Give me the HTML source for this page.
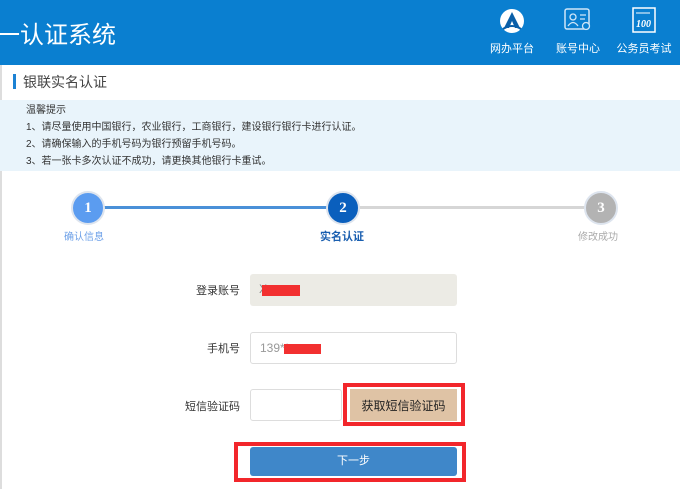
<!DOCTYPE html>
<html><head><meta charset="utf-8"><style>
*{margin:0;padding:0;box-sizing:border-box}
body{width:680px;height:489px;overflow:hidden;background:#fff;font-family:"Liberation Sans","Noto Sans CJK SC",sans-serif;position:relative}
.hd{position:absolute;left:0;top:0;width:680px;height:65px;background:#0a7fd0}
.ttl{position:absolute;left:-4px;top:15px;color:#fff;font-size:24px}
.nav{position:absolute;top:40px;color:#fff;font-size:11px;width:60px;text-align:center}
.ab{position:absolute}
.lbl{position:absolute;font-size:11px;color:#333;text-align:right;width:80px}
.tip{position:absolute;left:0;top:100px;width:680px;height:71px;background:#e9f4fb;font-size:10px;color:#333;padding:2px 0 0 26px;line-height:17px}
.c{position:absolute;width:34px;height:34px;border-radius:50%;color:#fff;font:bold 15px "Liberation Serif",serif;text-align:center;line-height:30px;border:2px solid #dde4ee}
</style></head><body>
<div class="hd"></div>
<div class="ttl">一认证系统</div>
<svg class="ab" style="left:499px;top:8px" width="26" height="26" viewBox="0 0 26 26"><circle cx="13" cy="13" r="12" fill="#fff"/><path d="M13 4 L5 20 L10 20 L13 13 L16 20 L21 20 Z" fill="#0a5fa8"/><path d="M4 21 Q13 15 22 21" stroke="#0a5fa8" stroke-width="2" fill="none"/></svg>
<div class="nav" style="left:482px">网办平台</div>
<svg class="ab" style="left:564px;top:8px" width="28" height="24" viewBox="0 0 28 24"><rect x="1" y="1" width="24" height="20" rx="2" fill="none" stroke="#cfe6f8" stroke-width="1.5"/><circle cx="9" cy="9" r="3" fill="none" stroke="#cfe6f8" stroke-width="1.3"/><path d="M4 18 Q9 11 14 18" fill="none" stroke="#cfe6f8" stroke-width="1.3"/><path d="M16 7h6M16 11h5" stroke="#cfe6f8" stroke-width="1.3"/><circle cx="22" cy="18" r="3.5" fill="#0a7fd0" stroke="#cfe6f8" stroke-width="1.3"/></svg>
<div class="nav" style="left:548px">账号中心</div>
<svg class="ab" style="left:632px;top:7px" width="24" height="26" viewBox="0 0 24 26"><rect x="1" y="1" width="22" height="24" fill="none" stroke="#fff" stroke-width="1.5"/><path d="M4 6h14" stroke="#fff"/><text x="4" y="20" fill="#fff" font-size="10" font-style="italic" font-weight="bold" font-family="Liberation Serif">100</text></svg>
<div class="nav" style="left:614px">公务员考试</div>
<div class="ab" style="left:0;top:65px;width:2px;height:424px;background:#ddd"></div>
<div class="ab" style="left:13px;top:74px;width:3px;height:15px;background:#1c82d4"></div>
<div class="ab" style="left:23px;top:72px;font-size:14px;color:#444">银联实名认证</div>
<div class="tip">温馨提示<br>1、请尽量使用中国银行，农业银行，工商银行，建设银行银行卡进行认证。<br>2、请确保输入的手机号码为银行预留手机号码。<br>3、若一张卡多次认证不成功，请更换其他银行卡重试。</div>
<div class="ab" style="left:100px;top:206px;width:230px;height:3px;background:#4a90d8"></div>
<div class="ab" style="left:355px;top:206px;width:235px;height:3px;background:#d6d6d6"></div>
<div class="c" style="left:71px;top:191px;background:#5b9cf0">1</div>
<div class="c" style="left:326px;top:191px;background:#0a5fbd">2</div>
<div class="c" style="left:584px;top:191px;background:#b3b3b3">3</div>
<div class="ab" style="left:64px;top:228px;font-size:10px;color:#6da0e8">确认信息</div>
<div class="ab" style="left:320px;top:228px;font-size:11px;font-weight:bold;color:#1a5fb0">实名认证</div>
<div class="ab" style="left:578px;top:228px;font-size:10px;color:#aaa">修改成功</div>
<div class="lbl" style="left:160px;top:282px">登录账号</div>
<div class="ab" style="left:250px;top:274px;width:207px;height:32px;background:#ecebe5;border-radius:3px;font-size:12px;color:#888;padding:8px 9px">X</div>
<div class="ab" style="left:262px;top:285px;width:38px;height:11px;background:#f23030"></div>
<div class="lbl" style="left:160px;top:340px">手机号</div>
<div class="ab" style="left:250px;top:332px;width:207px;height:32px;border:1px solid #ddd;border-radius:3px;font-size:12px;color:#999;padding:8px 9px">139**</div>
<div class="ab" style="left:284px;top:344px;width:37px;height:10px;background:#f23030"></div>
<div class="lbl" style="left:160px;top:398px">短信验证码</div>
<div class="ab" style="left:250px;top:389px;width:92px;height:32px;border:1px solid #ddd;border-radius:3px"></div>
<div class="ab" style="left:343px;top:383px;width:122px;height:43px;border:4px solid #f2262b"></div>
<div class="ab" style="left:350px;top:389px;width:107px;height:32px;background:#dfc3a5;font-size:12px;color:#222;text-align:center;line-height:34px">获取短信验证码</div>
<div class="ab" style="left:234px;top:442px;width:232px;height:40px;border:4px solid #f2262b"></div>
<div class="ab" style="left:250px;top:447px;width:207px;height:29px;background:#3f87c9;border-radius:3px;font-size:11px;color:#fff;text-align:center;line-height:29px">下一步</div>
</body></html>
